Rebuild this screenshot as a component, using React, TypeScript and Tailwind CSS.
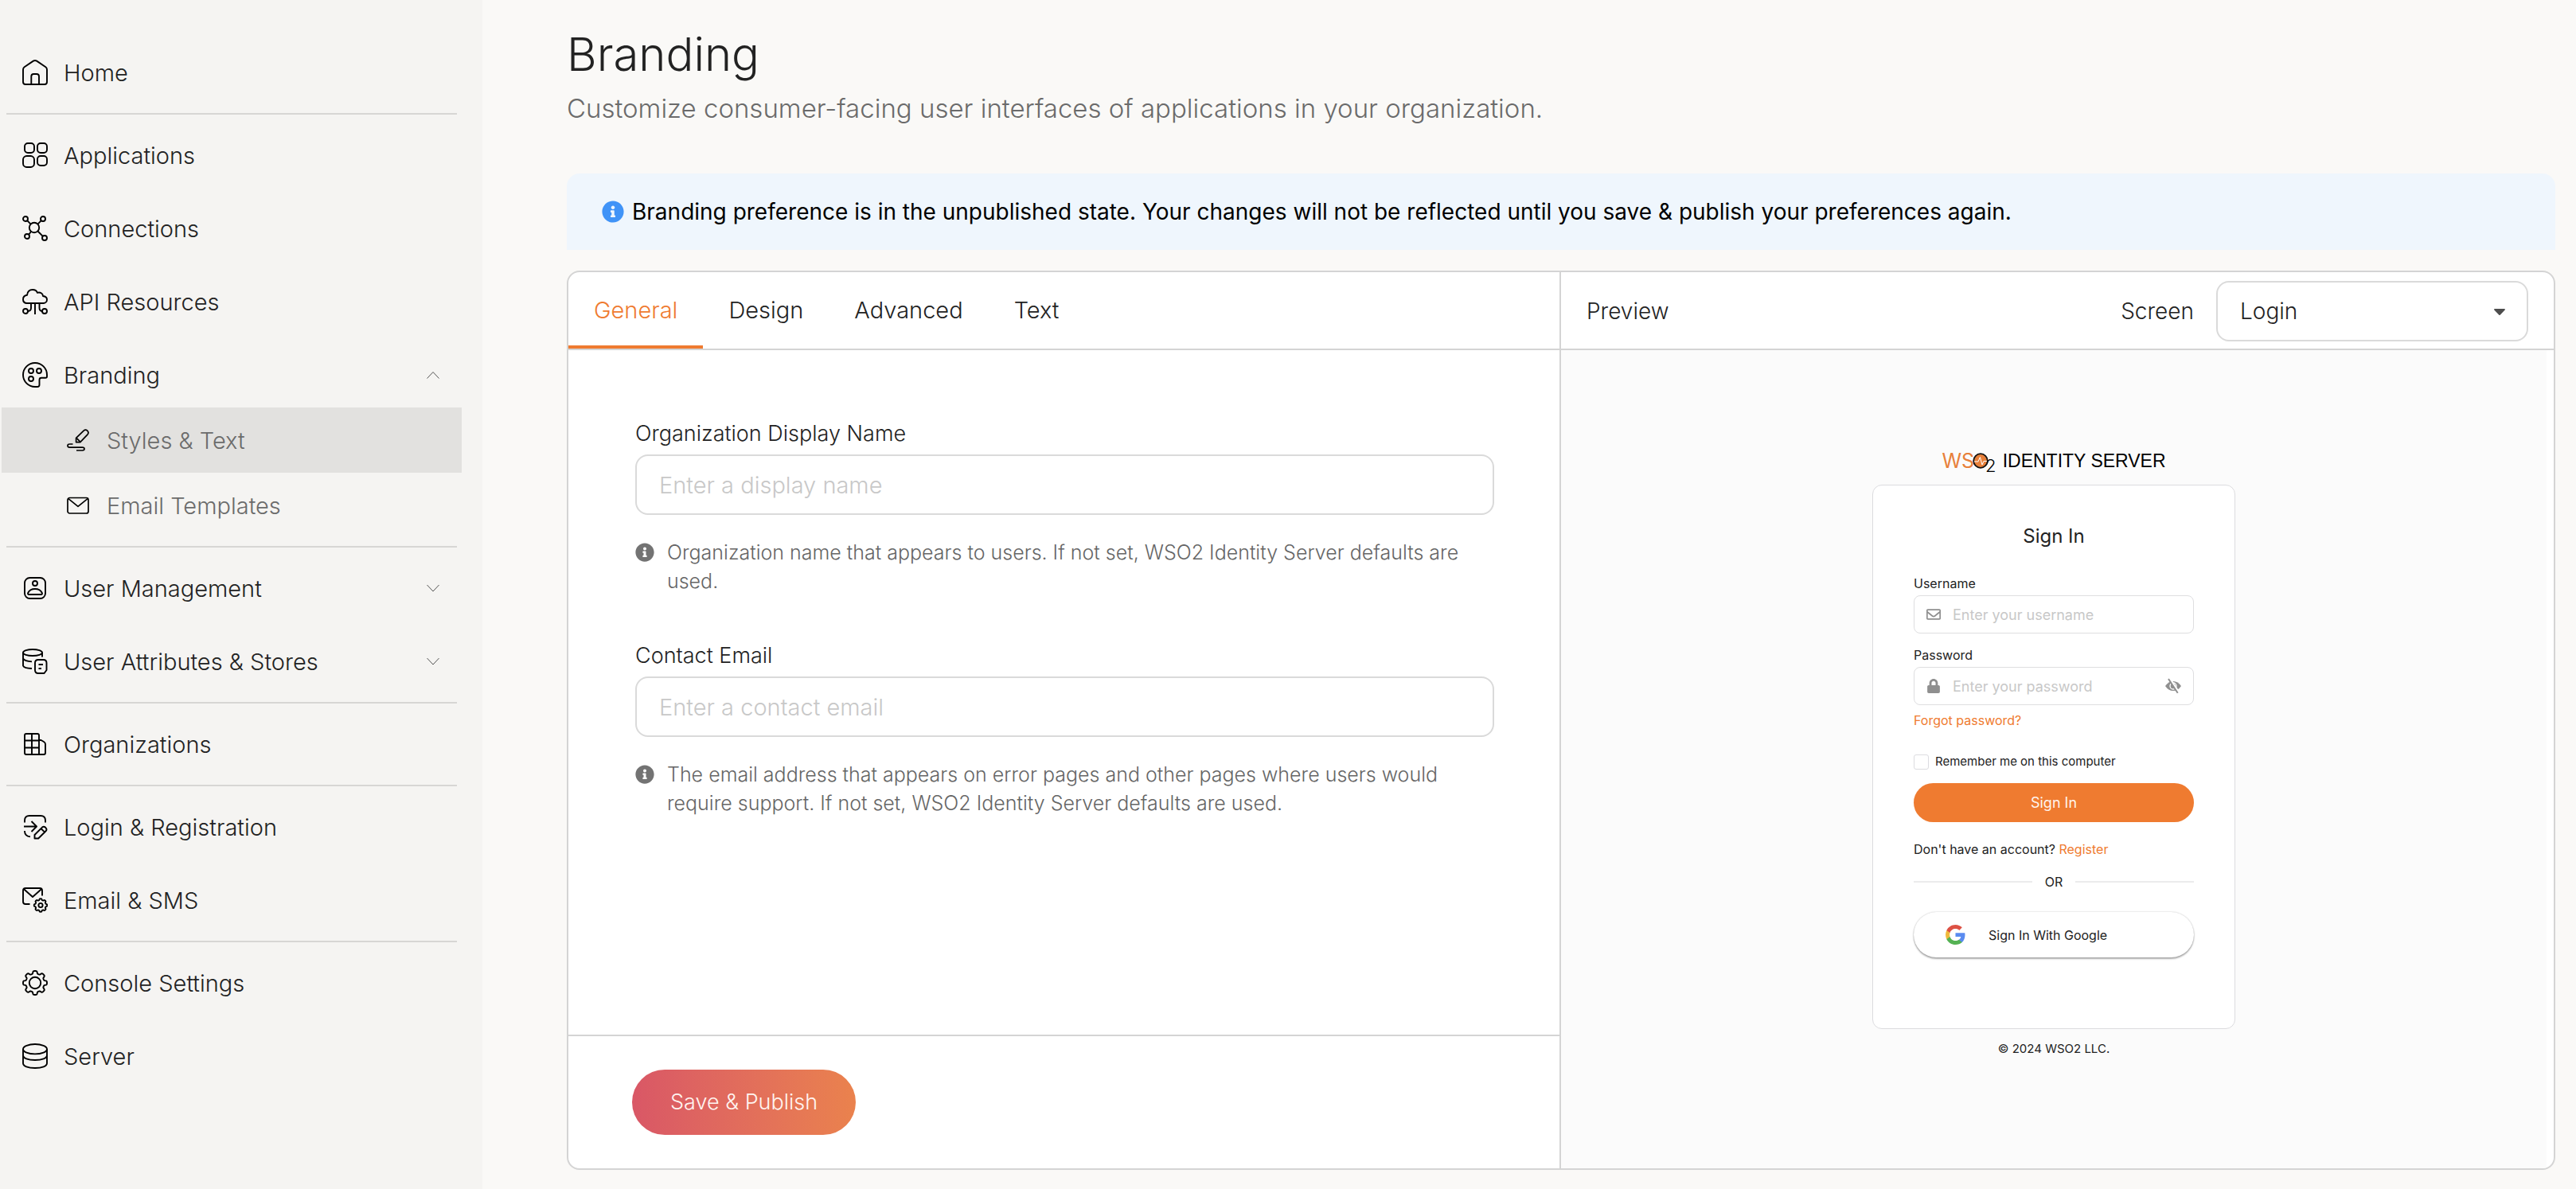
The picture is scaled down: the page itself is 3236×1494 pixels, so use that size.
import { Fragment, type ReactNode } from "react";
import { FaCaretDown, FaInfoCircle, FaLock, FaRegEnvelope } from "react-icons/fa";

function gearPath(cx: number, cy: number, inner: number, outer: number) {
  const points: string[] = [];
  const steps = 160;
  for (let i = 0; i < steps; i++) {
    const a = (i / steps) * Math.PI * 2;
    const wave = Math.tanh(2.4 * (Math.cos(8 * a) + 0.1));
    const r = (inner + outer) / 2 + ((outer - inner) / 2) * wave;
    points.push(`${(cx + r * Math.cos(a)).toFixed(2)} ${(cy + r * Math.sin(a)).toFixed(2)}`);
  }
  return `M${points.join("L")}Z`;
}

function Icon({ small, children }: { small?: boolean; children: ReactNode }) {
  return (
    <svg
      viewBox={small ? "0 0 28 28" : "0 0 32 32"}
      className={small ? "size-7 shrink-0 text-black" : "size-8 shrink-0 text-black"}
      fill="none"
      stroke="currentColor"
      strokeWidth={small ? 1.7 : 1.9}
      strokeLinejoin="round"
      aria-hidden="true"
    >
      {children}
    </svg>
  );
}

const HomeIcon = () => (
  <Icon>
    <path d="M13.8 1.6Q16 .4 18.2 1.6L29.4 9.2Q31 10.4 31 12.4V28Q31 31 28 31H4Q1 31 1 28V12.4Q1 10.4 2.6 9.2Z" />
    <path d="M11.3 31V21Q11.3 18 14.3 18H18Q21 18 21 21V31" />
  </Icon>
);

const AppsIcon = () => (
  <Icon>
    <rect x="3" y="1" width="12" height="12" rx="4" />
    <rect x="19" y="1" width="12" height="12" rx="4" />
    <rect x="1" y="17" width="14" height="14" rx="4.5" />
    <rect x="19" y="17" width="12" height="12" rx="4" />
  </Icon>
);

const ConnectionsIcon = () => (
  <Icon>
    <circle cx="15" cy="15" r="6.2" />
    <circle cx="4" cy="4" r="3" />
    <circle cx="26" cy="4" r="3" />
    <circle cx="6" cy="26" r="3" />
    <circle cx="28" cy="28" r="3" />
    <path d="M6.2 6.2 10.6 10.6M23.8 6.2 19.4 10.6M8.2 23.8 11 20M19.5 19.5 25.8 25.8" />
  </Icon>
);

const CloudIcon = () => (
  <Icon>
    <path d="M6 18C2.5 18 1 15.6 1 13.2C1 10.2 3 8.2 6 7.8C6.5 3.5 9.2 1 13 1C16 1 18 2.4 19 4.8C22.5 3.8 25.8 5.6 26 9C29 9.3 31 11 31 13.5C31 16 29 18 26.5 18Z" />
    <path d="M16 18V32M11 18V24Q11 27.6 7 28M21.5 18V24Q21.5 27.6 25 28" />
    <circle cx="4" cy="28" r="3" />
    <circle cx="28" cy="28" r="3" />
  </Icon>
);

const PaletteIcon = () => (
  <Icon>
    <path d="M16 31A15 15 0 1 1 31 16V18Q31 19.8 29.2 19.8H24Q21.5 19.8 21.5 22.3V28.5Q21.5 31 19 31Z" />
    <circle cx="11" cy="11" r="3" />
    <circle cx="21" cy="11" r="3" />
    <circle cx="11" cy="21" r="3" />
  </Icon>
);

const StylesIcon = () => (
  <Icon small>
    <path d="M11.6 16.6V11.4L21.2 2.1Q23.4 .2 25.8 2.2Q28 4.6 26.1 6.8L16.8 16.6ZM11.9 11.2 17 16.4" />
    <path d="M7.5 19H3.5Q1 19 1 21.1T3.5 23.2H19.5Q22 23.2 22 25.1T19.5 27H12" />
  </Icon>
);

const MailIcon = () => (
  <Icon small>
    <rect x="1" y="4.5" width="26" height="19.5" rx="2.5" />
    <path d="M1.6 5.4 14 15.4 26.4 5.4" />
  </Icon>
);

const UserIcon = () => (
  <Icon>
    <rect x="3" y="3" width="26" height="26" rx="6.5" />
    <circle cx="16" cy="10" r="3" />
    <path d="M8 24Q6.6 24 7.2 22Q9.4 17 16 17T24.8 22Q25.4 24 24 24Z" />
  </Icon>
);

const StoresIcon = () => (
  <Icon>
    <ellipse cx="13" cy="5" rx="12" ry="4" />
    <path d="M1 5V21.5Q2 24.6 12 25M1 12.6Q3 16 12 16.4M25 5V10.5" />
    <path d="M20 14H26.5Q30.5 14 30.5 18V27L27.5 31H20Q16 31 16 27V18Q16 14 20 14ZM20.5 20H26M20.5 25H24" />
  </Icon>
);

const BuildingIcon = () => (
  <Icon>
    <path d="M3 5Q3 3 5 3H19Q21 3 21 5V29H5Q3 29 3 27ZM12 3V29M3 11.5H21M3 20.5H21M21 9.5 27 13Q29 14.2 29 16V27Q29 29 27 29H20" />
  </Icon>
);

const LoginIcon = () => (
  <Icon>
    <path d="M3 10.5V8Q3 2 9 2H23Q29 2 29 8V10.5M3 21V22Q3.4 27.6 10 28.4M2 15.5H17.5M11.5 9 18 15.5 11.5 22" />
    <path d="M15.5 30.5V26L25.2 16.3Q27 15 29.2 16.8Q31.4 19 29.8 21L20.2 30.5ZM23.5 18 27.8 22.4" />
  </Icon>
);

const EmailGearIcon = () => (
  <Icon>
    <path d="M9.5 21H4Q1 21 1 18V4Q1 1 4 1H22Q25 1 25 4V10.5M1.8 2 13 12 24.2 2" />
    <path d={gearPath(23, 22.5, 6.6, 8.2)} />
    <circle cx="23" cy="22.5" r="2.6" />
  </Icon>
);

const GearIcon = () => (
  <Icon>
    <path d={gearPath(16, 16, 11.6, 15)} />
    <circle cx="16" cy="16" r="7.2" />
  </Icon>
);

const ServerIcon = () => (
  <Icon>
    <ellipse cx="16" cy="7.2" rx="15" ry="6.2" />
    <path d="M1 7V25C1 28.5 7 31 16 31S31 28.5 31 25V7M1 15C1 18.5 7 21 16 21S31 18.5 31 15" />
  </Icon>
);

function Chevron({ up }: { up?: boolean }) {
  return (
    <svg viewBox="0 0 16 16" className="ml-auto size-4" fill="none" stroke="#555" aria-hidden="true">
      <path d={up ? "M.5 12.5 8 4.5 15.5 12.5" : "M.5 4 8 12 15.5 4"} />
    </svg>
  );
}

type Item = { label: string; icon: ReactNode; expand?: "up" | "down"; children?: Item[] };

const groups: Item[][] = [
  [{ label: "Home", icon: <HomeIcon /> }],
  [
    { label: "Applications", icon: <AppsIcon /> },
    { label: "Connections", icon: <ConnectionsIcon /> },
    { label: "API Resources", icon: <CloudIcon /> },
    {
      label: "Branding",
      icon: <PaletteIcon />,
      expand: "up",
      children: [
        { label: "Styles & Text", icon: <StylesIcon /> },
        { label: "Email Templates", icon: <MailIcon /> },
      ],
    },
  ],
  [
    { label: "User Management", icon: <UserIcon />, expand: "down" },
    { label: "User Attributes & Stores", icon: <StoresIcon />, expand: "down" },
  ],
  [{ label: "Organizations", icon: <BuildingIcon /> }],
  [
    { label: "Login & Registration", icon: <LoginIcon /> },
    { label: "Email & SMS", icon: <EmailGearIcon /> },
  ],
  [
    { label: "Console Settings", icon: <GearIcon /> },
    { label: "Server", icon: <ServerIcon /> },
  ],
];

function NavItem({ item }: { item: Item }) {
  const cls = "flex h-[82px] w-full items-center gap-5 pr-7 pl-[26px] text-[29px] font-[350] text-[#222]";
  if (!item.expand) {
    return (
      <a href="#" className={cls}>
        {item.icon}
        <span className="pt-0.5">{item.label}</span>
      </a>
    );
  }
  return (
    <div>
      <button type="button" aria-expanded={item.expand === "up"} className={cls}>
        {item.icon}
        <span className="pt-0.5">{item.label}</span>
        <Chevron up={item.expand === "up"} />
      </button>
      {item.children?.map((child, i) => (
        <a
          key={child.label}
          href="#"
          className={
            i === 0
              ? "flex h-[82px] items-center gap-[22px] bg-[#e2e1df] pl-[82px] text-[29px] font-[350] text-[#6b6b6b]"
              : "flex h-[82px] items-center gap-[22px] pl-[82px] text-[29px] font-[350] text-[#6b6b6b]"
          }
        >
          {child.icon}
          <span className="pt-0.5">{child.label}</span>
        </a>
      ))}
    </div>
  );
}

function Sidebar() {
  return (
    <nav className="w-[606px] shrink-0 bg-[#f5f4f2] pt-[50px] pl-0.5">
      <div className="flex w-[578px] flex-col gap-2.5">
        {groups.map((group, i) => (
          <Fragment key={i}>
            {i > 0 && <hr className="mx-1.5 border-t-2 border-[#d7d6d4]" />}
            {group.map((item) => (
              <NavItem key={item.label} item={item} />
            ))}
          </Fragment>
        ))}
      </div>
    </nav>
  );
}

function Field({ id, label, placeholder, hint }: { id: string; label: string; placeholder: string; hint: string }) {
  return (
    <div>
      <label htmlFor={id} className="block text-[27px] leading-8 font-[350] text-[#222]">
        {label}
      </label>
      <input
        id={id}
        type="text"
        placeholder={placeholder}
        className="mt-2.5 h-[76px] w-full rounded-2xl border-2 border-[#dadada] bg-white px-7 text-[29px] font-[350] placeholder:text-[#c8c8c8]"
      />
      <div className="mt-[29px] flex gap-4 text-[25px] leading-9 font-[350] text-[#666]">
        <FaInfoCircle className="mt-1.5 size-6 shrink-0 text-[#737373]" aria-hidden="true" />
        <p>{hint}</p>
      </div>
    </div>
  );
}

function Logo() {
  return (
    <div className="mb-4 flex h-7 items-center text-black">
      <span className="text-[25px] leading-7 text-[#e8803a]">WS</span>
      <svg viewBox="0 0 20 20" className="-ml-0.5 size-5" aria-label="O" role="img">
        <circle cx="10" cy="10" r="8.8" fill="#e8803a" stroke="#111" strokeWidth="1.8" />
        <path d="M2 11H7L9.4 5.5L12 15L14 10.5H18" fill="none" stroke="#fff" strokeWidth="1" />
      </svg>
      <span className="-ml-1 pt-3 text-[22px] leading-4 font-light">2</span>
      <span className="ml-2 font-['Liberation_Sans',sans-serif] text-[23px] leading-7">IDENTITY SERVER</span>
    </div>
  );
}

function GoogleLogo() {
  return (
    <svg viewBox="0 0 24 24" className="size-[25px]" aria-hidden="true">
      <path
        fill="#5a8bf0"
        d="M23.5 12.3c0-.9-.1-1.6-.2-2.4H12v4.6h6.5c-.3 1.5-1.1 2.8-2.4 3.7v3h3.9c2.2-2.1 3.5-5.1 3.5-8.9z"
      />
      <path
        fill="#55b253"
        d="M12 24c3.2 0 6-1.1 8-2.9l-3.9-3c-1.1.7-2.5 1.2-4.1 1.2-3.1 0-5.8-2.1-6.7-5H1.3v3.1C3.3 21.3 7.3 24 12 24z"
      />
      <path fill="#efba3d" d="M5.3 14.3c-.5-1.5-.5-3.1 0-4.6V6.6h-4c-1.7 3.4-1.7 7.4 0 10.8z" />
      <path
        fill="#dd5144"
        d="M12 4.8c1.8 0 3.3.6 4.6 1.8l3.4-3.4C17.9 1.2 15.2 0 12 0 7.3 0 3.3 2.7 1.3 6.6l4 3.1c.9-2.9 3.6-4.9 6.7-4.9z"
      />
    </svg>
  );
}

function EyeSlash() {
  return (
    <svg viewBox="0 0 20 20" className="size-5" aria-hidden="true">
      <path d="M0 10Q4 4 10 4T20 10Q16 16 10 16T0 10Z" fill="#8f8f8f" />
      <circle cx="10" cy="10" r="4" fill="none" stroke="#fff" strokeWidth="1.3" />
      <path d="M5.8 .8 17.5 18.6" stroke="#fff" strokeWidth="2.6" />
      <path d="M4 1 15.7 18.8" stroke="#8f8f8f" strokeWidth="2" />
    </svg>
  );
}

function LoginPreview() {
  return (
    <div className="mr-[9px] flex flex-1 flex-col items-center bg-[#fbfbfb] pt-[125px] text-[#222]">
      <Logo />
      <form className="flex w-[456px] flex-col rounded-xl border border-[#dcdcdf] bg-white px-[51px] pt-12 pb-[89px]">
        <h2 className="text-center text-[24px] leading-8">Sign In</h2>
        <label htmlFor="username" className="mt-[31px] text-[16px] leading-6">
          Username
        </label>
        <div className="mt-[3px] flex h-12 items-center gap-[15px] rounded-lg border border-[#dedee0] px-[15px]">
          <FaRegEnvelope className="size-[18px] text-[#8f8f8f]" aria-hidden="true" />
          <input
            id="username"
            type="text"
            placeholder="Enter your username"
            className="min-w-0 flex-1 text-[18px] placeholder:text-[#c8c8c8]"
          />
        </div>
        <label htmlFor="password" className="mt-[15px] text-[16px] leading-6">
          Password
        </label>
        <div className="mt-[3px] flex h-12 items-center gap-[15px] rounded-lg border border-[#dedee0] px-[15px]">
          <FaLock className="size-[18px] text-[#8f8f8f]" aria-hidden="true" />
          <input
            id="password"
            type="password"
            placeholder="Enter your password"
            className="min-w-0 flex-1 text-[18px] placeholder:text-[#c8c8c8]"
          />
          <button type="button" aria-label="Show password">
            <EyeSlash />
          </button>
        </div>
        <a href="#" className="mt-[7px] self-start text-[16px] leading-6 text-[#ef7b30]">
          Forgot password?
        </a>
        <label className="mt-7 flex items-center gap-2 text-[15px] leading-6">
          <input type="checkbox" className="size-[19px] appearance-none rounded-[3px] border border-[#dcdce0]" />
          Remember me on this computer
        </label>
        <button type="button" className="mt-[15px] h-[49px] rounded-full bg-[#ef7b30] text-[18px] text-[#fff4ec]">
          Sign In
        </button>
        <p className="mt-[22px] text-[16px] leading-6">
          Don't have an account?{" "}
          <a href="#" className="text-[#ef7b30]">
            Register
          </a>
        </p>
        <div className="mt-[17px] flex items-center gap-4 text-[16px] leading-6">
          <span className="h-0.5 flex-1 bg-[#ebebec]" />
          OR
          <span className="h-0.5 flex-1 bg-[#ebebec]" />
        </div>
        <button
          type="button"
          className="mt-[26px] flex h-[57px] items-center gap-[29px] rounded-full bg-white pl-10 text-[16px] shadow-[0_0_2px_rgba(0,0,0,0.25),0_2px_2px_rgba(0,0,0,0.3)]"
        >
          <GoogleLogo />
          Sign In With Google
        </button>
      </form>
      <p className="mt-[13px] text-[15px] leading-6">© 2024 WSO2 LLC.</p>
    </div>
  );
}

const tabs = ["General", "Design", "Advanced", "Text"];

export default function App() {
  return (
    <div className="flex min-h-screen bg-[#faf9f7] font-['Inter',sans-serif] text-[#222]">
      <Sidebar />
      <main className="flex min-w-0 flex-1 flex-col pt-9 pr-[26px] pb-6 pl-[106px]">
        <h1 className="text-[58px] leading-[64px] font-[350] text-[#222]">Branding</h1>
        <p className="mt-3.5 text-[33px] leading-[44px] font-[350] text-[#6b6b6b]">
          Customize consumer-facing user interfaces of applications in your organization.
        </p>
        <div className="mt-[60px] flex h-24 items-center gap-2.5 rounded-t-2xl bg-[#eff6fd] px-11 text-[28px] text-black">
          <FaInfoCircle className="size-7 text-[#4093f7]" aria-hidden="true" />
          Branding preference is in the unpublished state. Your changes will not be reflected until you save &amp;
          publish your preferences again.
        </div>
        <div className="mt-[26px] grid flex-1 grid-cols-2 overflow-hidden rounded-2xl border-2 border-[#d4d4d4] bg-white">
          <section className="flex flex-col border-r-2 border-[#d4d4d4]">
            <div role="tablist" className="flex h-[98px] border-b-2 border-[#d4d4d4]">
              {tabs.map((tab, i) => (
                <button
                  key={tab}
                  type="button"
                  role="tab"
                  aria-selected={i === 0}
                  className={
                    i === 0
                      ? "border-b-4 border-[#ef7b30] px-8 pt-1 text-[29px] font-[350] text-[#ef7b30]"
                      : "border-b-4 border-transparent px-8 pt-1 text-[29px] font-[350] text-[#222]"
                  }
                >
                  {tab}
                </button>
              ))}
            </div>
            <div className="flex flex-1 flex-col gap-[60px] pt-[89px] pr-[82px] pl-[84px]">
              <Field
                id="display-name"
                label="Organization Display Name"
                placeholder="Enter a display name"
                hint="Organization name that appears to users. If not set, WSO2 Identity Server defaults are used."
              />
              <Field
                id="contact-email"
                label="Contact Email"
                placeholder="Enter a contact email"
                hint="The email address that appears on error pages and other pages where users would require support. If not set, WSO2 Identity Server defaults are used."
              />
            </div>
            <div className="border-t-2 border-[#d4d4d4] px-20 py-[42px]">
              <button
                type="button"
                className="h-[82px] rounded-full bg-linear-to-r from-[#d95766] to-[#ea824d] px-12 text-[27px] font-[350] text-[#fff4f0]"
              >
                Save &amp; Publish
              </button>
            </div>
          </section>
          <section className="flex flex-col">
            <div className="flex h-[98px] items-center border-b-2 border-[#d4d4d4] px-8 pt-0.5 text-[28px] font-[350]">
              <h2 className="flex-1">Preview</h2>
              <label htmlFor="screen" className="mr-7">
                Screen
              </label>
              <div className="grid w-[392px] items-center">
                <select
                  id="screen"
                  className="col-start-1 row-start-1 h-[76px] w-full appearance-none rounded-2xl border-2 border-[#dadada] bg-white px-7"
                >
                  <option>Login</option>
                </select>
                <FaCaretDown
                  className="pointer-events-none col-start-1 row-start-1 mr-6 size-6 justify-self-end text-[#4d4d4d]"
                  aria-hidden="true"
                />
              </div>
            </div>
            <LoginPreview />
          </section>
        </div>
      </main>
    </div>
  );
}
